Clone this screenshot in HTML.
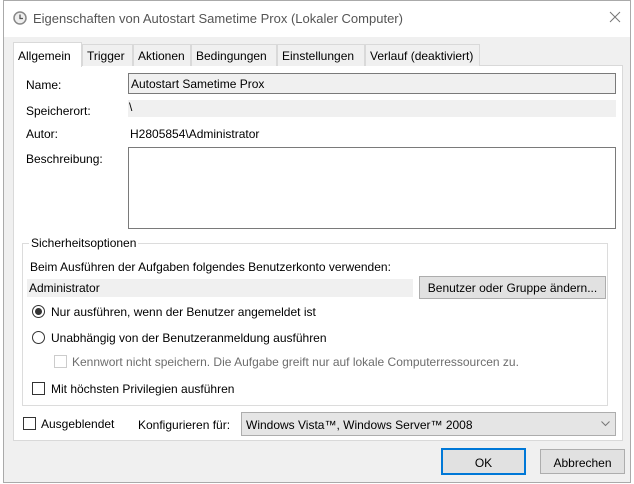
<!DOCTYPE html><html><head><style>
body{margin:0;width:634px;height:484px;background:#fff;font-family:"Liberation Sans",sans-serif;font-size:12px;color:#000;position:relative;overflow:hidden}
div,span{position:absolute;box-sizing:border-box}
.t{white-space:nowrap}
.tab{top:44px;height:22px;border:1px solid #d9d9d9;border-bottom:none;background:#f0f0f0;padding:4px 0 0 4px}
.btn{background:#e1e1e1;border:1px solid #adadad;text-align:center}
.cb{width:13px;height:13px;border:1px solid #333;background:#fff}
.rb{width:13px;height:13px;border:1px solid #333;border-radius:50%;background:#fff}
</style></head><body>
<div style="left:0;top:0;width:3px;height:484px;background:#fff"></div>
<div style="left:3px;top:0;width:628px;height:483px;border:1px solid #aaa;background:#f0f0f0"></div>
<div style="left:4px;top:1px;width:626px;height:36px;background:#fff"></div>
<svg style="position:absolute;left:13px;top:11px" width="14" height="14" viewBox="0 0 14 14"><circle cx="7" cy="7" r="6" fill="#eee" stroke="#888" stroke-width="1.5"/><path d="M7 3.5V7.5H10" stroke="#555" stroke-width="1.3" fill="none"/></svg>
<div class="t" style="left:33px;top:11px;font-size:13px;color:#555">Eigenschaften von Autostart Sametime Prox (Lokaler Computer)</div>
<svg style="position:absolute;left:609px;top:11px" width="12" height="12" viewBox="0 0 12 12"><path d="M1 1L11 11M11 1L1 11" stroke="#777" stroke-width="1"/></svg>
<div style="left:13px;top:65px;width:610px;height:376px;background:#fff;border:1px solid #d9d9d9"></div>
<div class="tab" style="left:82px;width:51px">Trigger</div>
<div class="tab" style="left:133px;width:58px">Aktionen</div>
<div class="tab" style="left:191px;width:86px">Bedingungen</div>
<div class="tab" style="left:277px;width:88px">Einstellungen</div>
<div class="tab" style="left:365px;width:115px">Verlauf (deaktiviert)</div>
<div class="tab" style="left:13px;top:42px;height:25px;width:69px;background:#fff;padding-top:6px">Allgemein</div>
<div class="t" style="left:26px;top:78px">Name:</div>
<div style="left:128px;top:73px;width:488px;height:21px;background:#f0f0f0;border:1px solid #7a7a7a;padding:3px 0 0 2px" class="t">Autostart Sametime Prox</div>
<div class="t" style="left:26px;top:104px">Speicherort:</div>
<div style="left:128px;top:100px;width:488px;height:17px;background:#f0f0f0;padding:0 0 0 1px" class="t">\</div>
<div class="t" style="left:26px;top:127px">Autor:</div>
<div class="t" style="left:130px;top:127px">H2805854\Administrator</div>
<div class="t" style="left:26px;top:152px">Beschreibung:</div>
<div style="left:128px;top:147px;width:488px;height:82px;border:1px solid #7a7a7a;background:#fff"></div>
<div style="left:22px;top:243px;width:586px;height:163px;border:1px solid #dcdcdc"></div>
<div class="t" style="left:29px;top:236px;background:#fff;padding:0 2px">Sicherheitsoptionen</div>
<div class="t" style="left:30px;top:260px">Beim Ausführen der Aufgaben folgendes Benutzerkonto verwenden:</div>
<div class="t" style="left:27px;top:279px;width:386px;height:18px;background:#f0f0f0;padding:2px 0 0 2px">Administrator</div>
<div class="btn t" style="left:419px;top:276px;width:187px;height:23px;padding-top:4px">Benutzer oder Gruppe ändern...</div>
<div class="rb" style="left:32px;top:305px"></div><div style="left:35px;top:308px;width:7px;height:7px;border-radius:50%;background:#333"></div>
<div class="t" style="left:51px;top:305px">Nur ausführen, wenn der Benutzer angemeldet ist</div>
<div class="rb" style="left:32px;top:331px"></div>
<div class="t" style="left:51px;top:331px">Unabhängig von der Benutzeranmeldung ausführen</div>
<div class="cb" style="left:54px;top:355px;border-color:#ccc"></div>
<div class="t" style="left:72px;top:355px;color:#6d6d6d">Kennwort nicht speichern. Die Aufgabe greift nur auf lokale Computerressourcen zu.</div>
<div class="cb" style="left:32px;top:382px"></div>
<div class="t" style="left:51px;top:382px">Mit höchsten Privilegien ausführen</div>
<div class="cb" style="left:23px;top:417px"></div>
<div class="t" style="left:41px;top:417px">Ausgeblendet</div>
<div class="t" style="left:138px;top:418px">Konfigurieren für:</div>
<div class="t" style="left:241px;top:412px;width:375px;height:24px;background:#e5e5e5;border:1px solid #adadad;padding:5px 0 0 4px">Windows Vista™, Windows Server™ 2008</div>
<svg style="position:absolute;left:601px;top:421px" width="9" height="6" viewBox="0 0 9 6"><path d="M0.5 0.5L4.5 4.5L8.5 0.5" stroke="#777" fill="none"/></svg>
<div class="btn t" style="left:441px;top:448px;width:85px;height:27px;border:2px solid #0078d7;padding-top:6px">OK</div>
<div class="btn t" style="left:540px;top:449px;width:85px;height:25px;padding-top:6px">Abbrechen</div>
</body></html>
